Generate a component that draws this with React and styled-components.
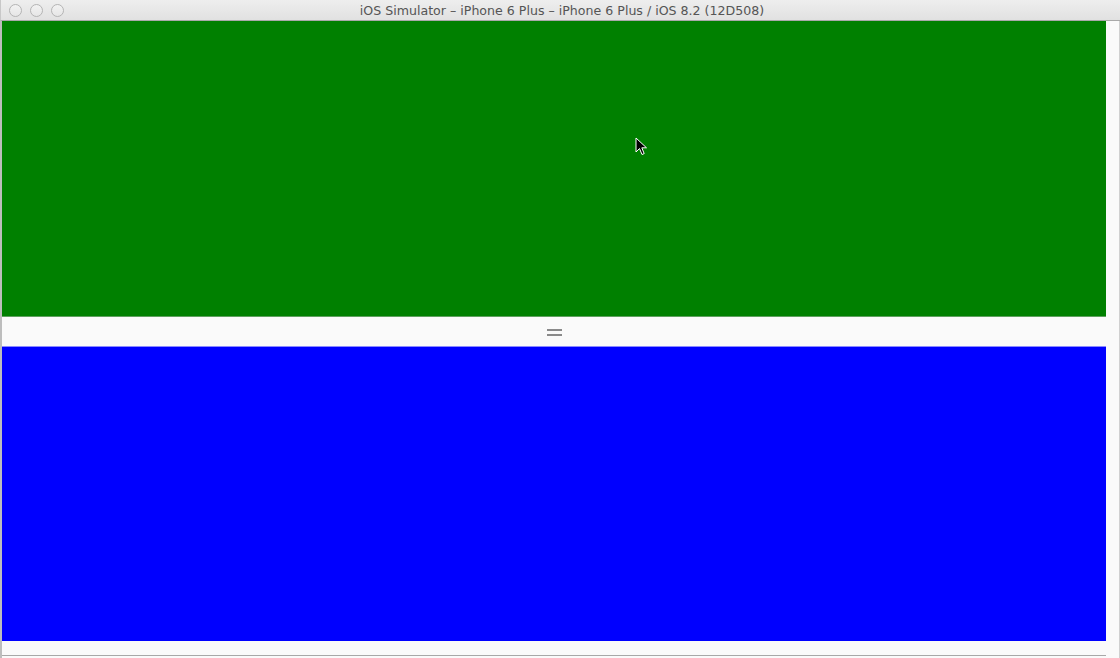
import React from "react";
import styled, { createGlobalStyle } from "styled-components";

const Global = createGlobalStyle`
  html, body { margin: 0; padding: 0; background: #ffffff; }
  body { width: 1120px; height: 658px; overflow: hidden; }
`;

const Window = styled.div`
  position: relative;
  width: 1120px;
  height: 658px;
  display: flex;
  flex-direction: column;
  background: #fafafa;
  font-family: "DejaVu Sans", "Liberation Sans", sans-serif;
`;

const TitleBar = styled.div`
  height: 20px;
  flex: none;
  display: flex;
  align-items: center;
  position: relative;
  background: linear-gradient(#eeeeee, #e1e1e1);
  border-bottom: 1px solid #a9a9a9;
  border-left: 1px solid #c8c8c8;
`;

const Lights = styled.div`
  display: flex;
  gap: 8px;
  padding-left: 8px;
`;

const Light = styled.span`
  width: 11px;
  height: 11px;
  border-radius: 50%;
  border: 1px solid #b4b4b4;
  background: linear-gradient(#f2f2f2, #e6e6e6);
`;

const Title = styled.div`
  flex: 1;
  text-align: center;
  font-size: 12.6px;
  color: #555555;
  margin-right: 60px;
`;

const Body = styled.div`
  flex: 1;
  display: flex;
  border-left: 2px solid #bdbdbd;
`;

const Screen = styled.div`
  width: 1104px;
  display: flex;
  flex-direction: column;
`;

const Pane = styled.div`
  height: ${(p) => p.$h}px;
  background: ${(p) => p.$color};
`;

const Divider = styled.div`
  height: 29px;
  background: #fafafa;
  border-top: 1px solid #5fa05f;
  border-bottom: 1px solid #8a8aff;
  display: flex;
  align-items: center;
  justify-content: center;
`;

const Grip = styled.div`
  width: 15px;
  display: flex;
  flex-direction: column;
  gap: 3px;
  margin-top: 1px;
  span {
    height: 2px;
    background: #8a8a8a;
  }
`;

const SideStrip = styled.div`
  flex: 1;
  background: #fafafa;
  border-right: 1px solid #d0d0d0;
`;

const Footer = styled.div`
  height: 14px;
  border-bottom: 1px solid #a8a8a8;
`;

const Cursor = styled.svg`
  position: absolute;
  left: 635px;
  top: 137px;
`;

export default function App() {
  return (
    <>
      <Global />
      <Window>
        <TitleBar>
          <Lights>
            <Light />
            <Light />
            <Light />
          </Lights>
          <Title>iOS Simulator – iPhone 6 Plus – iPhone 6 Plus / iOS 8.2 (12D508)</Title>
        </TitleBar>
        <Body>
          <Screen>
            <Pane $h={295} $color="#008000" />
            <Divider>
              <Grip>
                <span />
                <span />
              </Grip>
            </Divider>
            <Pane $h={294} $color="#0000ff" />
            <Footer />
          </Screen>
          <SideStrip />
        </Body>
        <Cursor width="14" height="20" viewBox="0 0 14 20">
          <path
            d="M1 1 L1 15 L4.5 11.5 L7 17.5 L9.2 16.6 L6.8 10.8 L11.5 10.8 Z"
            fill="#000"
            stroke="#fff"
            strokeWidth="1"
            strokeLinejoin="round"
          />
        </Cursor>
      </Window>
    </>
  );
}
